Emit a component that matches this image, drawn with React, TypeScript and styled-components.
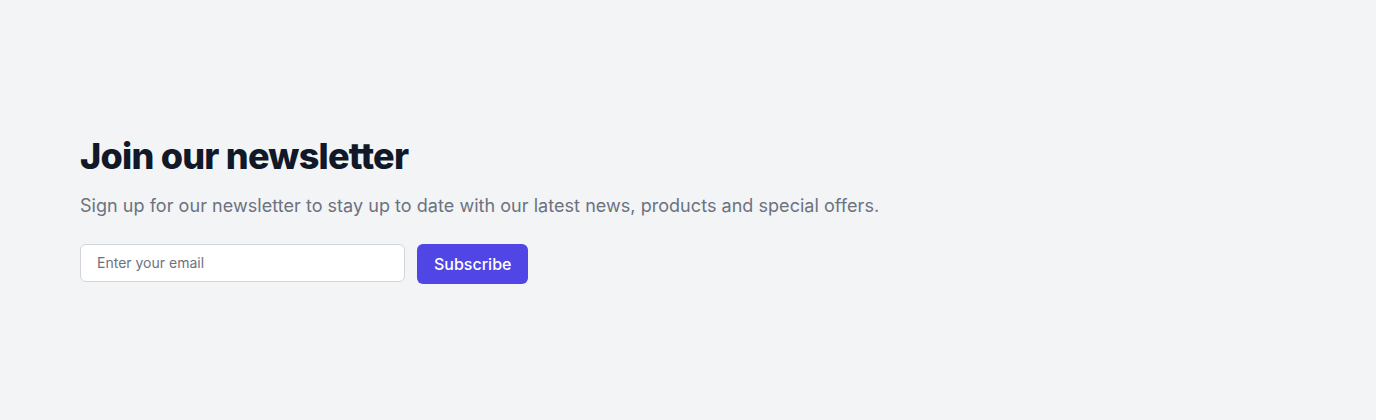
import React, { useState } from 'react'
import styled, { createGlobalStyle } from 'styled-components'

const GlobalStyle = createGlobalStyle`
  html, body {
    margin: 0;
    padding: 0;
    background: #f3f4f6;
    font-family: Inter, "Noto Sans", sans-serif;
  }
  * { box-sizing: border-box; }
`

const Section = styled.section`
  display: flex;
  flex-direction: column;
  justify-content: center;
  min-height: 420px;
  padding: 0 80px;
  background: #f3f4f6;
`

const Title = styled.h2`
  margin: 0;
  font-size: 36px;
  line-height: 40px;
  font-weight: 800;
  letter-spacing: -0.021em;
  color: #111827;
`

const Lead = styled.p`
  margin: 16px 0 0;
  font-size: 18px;
  line-height: 28px;
  letter-spacing: 0.04px;
  color: #6b7280;
`

const Form = styled.form`
  display: flex;
  gap: 12px;
  margin-top: 24px;
`

const EmailInput = styled.input`
  width: 325px;
  height: 38px;
  padding: 0 16px 2px;
  border: 1px solid #d1d5db;
  border-radius: 6px;
  background: #fff;
  font-family: inherit;
  font-size: 14px;
  color: #111827;

  &::placeholder {
    color: #6b7280;
  }
`

const Button = styled.button`
  height: 40px;
  padding: 0 17px;
  border: 0;
  border-radius: 6px;
  background: #4f46e5;
  color: #fff;
  font-family: inherit;
  font-size: 16px;
  font-weight: 500;
  cursor: pointer;
`

const App: React.FC = () => {
  const [email, setEmail] = useState('')

  return (
    <>
      <GlobalStyle />
      <Section>
        <Title>Join our newsletter</Title>
        <Lead>Sign up for our newsletter to stay up to date with our latest news, products and special offers.</Lead>
        <Form onSubmit={e => e.preventDefault()}>
          <EmailInput
            type="email"
            placeholder="Enter your email"
            value={email}
            onChange={e => setEmail(e.target.value)}
          />
          <Button type="submit">Subscribe</Button>
        </Form>
      </Section>
    </>
  )
}

export default App
